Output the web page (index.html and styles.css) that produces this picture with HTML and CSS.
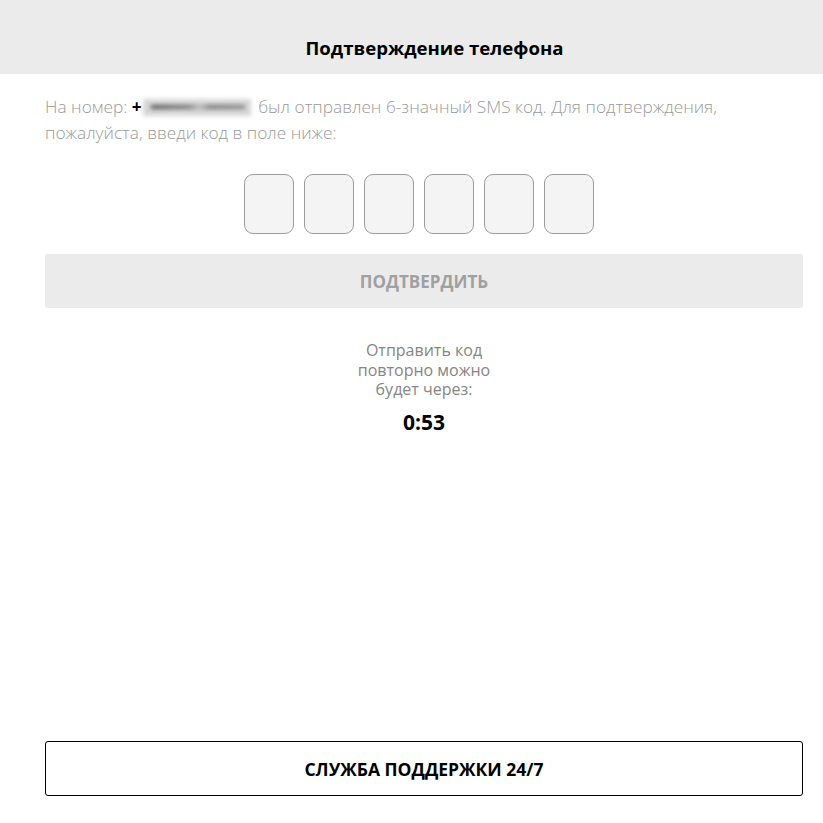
FILE: index.html
```html
<!DOCTYPE html>
<html lang="ru">
<head>
	<meta charset="UTF-8">
	<title>Подтверждение телефона</title>
	<link rel="stylesheet" href="styles.css">
</head>
<body>
	<div class="page">
		<div class="header">Подтверждение телефона</div>
		<div class="content">
			<p class="info">На номер: <b class="plus">+</b><span class="phone"><i></i></span> был отправлен 6-значный SMS код. Для подтверждения,<br>пожалуйста, введи код в поле ниже:</p>
			<div class="code">
				<input type="text" maxlength="1">
				<input type="text" maxlength="1">
				<input type="text" maxlength="1">
				<input type="text" maxlength="1">
				<input type="text" maxlength="1">
				<input type="text" maxlength="1">
			</div>
			<button class="btn-confirm" disabled>Подтвердить</button>
			<div class="resend">Отправить код повторно можно будет через:</div>
			<div class="timer">0:53</div>
		</div>
		<button class="btn-support">Служба поддержки 24/7</button>
	</div>
</body>
</html>
```
FILE: styles.css
```css
body{
	margin: 0;
	font-family: "Open Sans", "Noto Sans", sans-serif;
	background: #fff;
}
.page{
	display: flex;
	flex-direction: column;
	min-height: 100vh;
	box-sizing: border-box;
	padding-bottom: 27px;
}
.header{
	background: #ebebeb;
	height: 74px;
	box-sizing: border-box;
	padding: 36px 0 0 46px;
	text-align: center;
	font-size: 18.6px;
	font-weight: 700;
	line-height: 24px;
	color: #000;
}
.content{
	padding: 0 20px 0 45px;
}
.info{
	margin: 20px 0 0 0;
	font-size: 17.3px;
	font-weight: 300;
	line-height: 26px;
	color: #9a9a9a;
}
.plus{
	color: #000;
	font-weight: 700;
}
/* скрытый номер - размытая плашка */
.phone{
	display: inline-block;
	width: 108px;
	height: 17px;
	margin: 0 3px 0 1px;
	vertical-align: -3px;
	background: #d6d6d6;
	filter: blur(2px);
}
.phone i{
	display: block;
	height: 4px;
	margin: 6px 6px 0 8px;
	background: linear-gradient(90deg, #555 0, #777 40%, #bbb 52%, #777 62%, #888 100%);
}
.code{
	display: flex;
	justify-content: center;
	gap: 10px;
	margin-top: 28px;
	padding-right: 10px;
}
.code input{
	width: 50px;
	height: 60px;
	box-sizing: border-box;
	border: 1px solid #9c9c9c;
	border-radius: 9px;
	background: #f4f4f4;
	padding: 0;
	text-align: center;
	font-size: 24px;
	font-family: inherit;
}
.btn-confirm{
	display: block;
	width: 100%;
	height: 54px;
	margin-top: 20px;
	border: none;
	border-radius: 2px;
	background: #ebebeb;
	color: #a0a0a0;
	font-family: inherit;
	font-size: 17px;
	font-weight: 700;
	text-transform: uppercase;
}
.resend{
	width: 150px;
	margin: 33px auto 0 auto;
	text-align: center;
	font-size: 16px;
	line-height: 19.5px;
	color: #858585;
}
.timer{
	margin-top: 8px;
	text-align: center;
	font-size: 21px;
	font-weight: 700;
	line-height: 28px;
	color: #000;
}
.btn-support{
	display: block;
	margin: auto 20px 0 45px;
	height: 55px;
	border: 1px solid #000;
	border-radius: 3px;
	background: #fff;
	color: #000;
	font-family: inherit;
	font-size: 17.5px;
	font-weight: 700;
	text-transform: uppercase;
}
```
